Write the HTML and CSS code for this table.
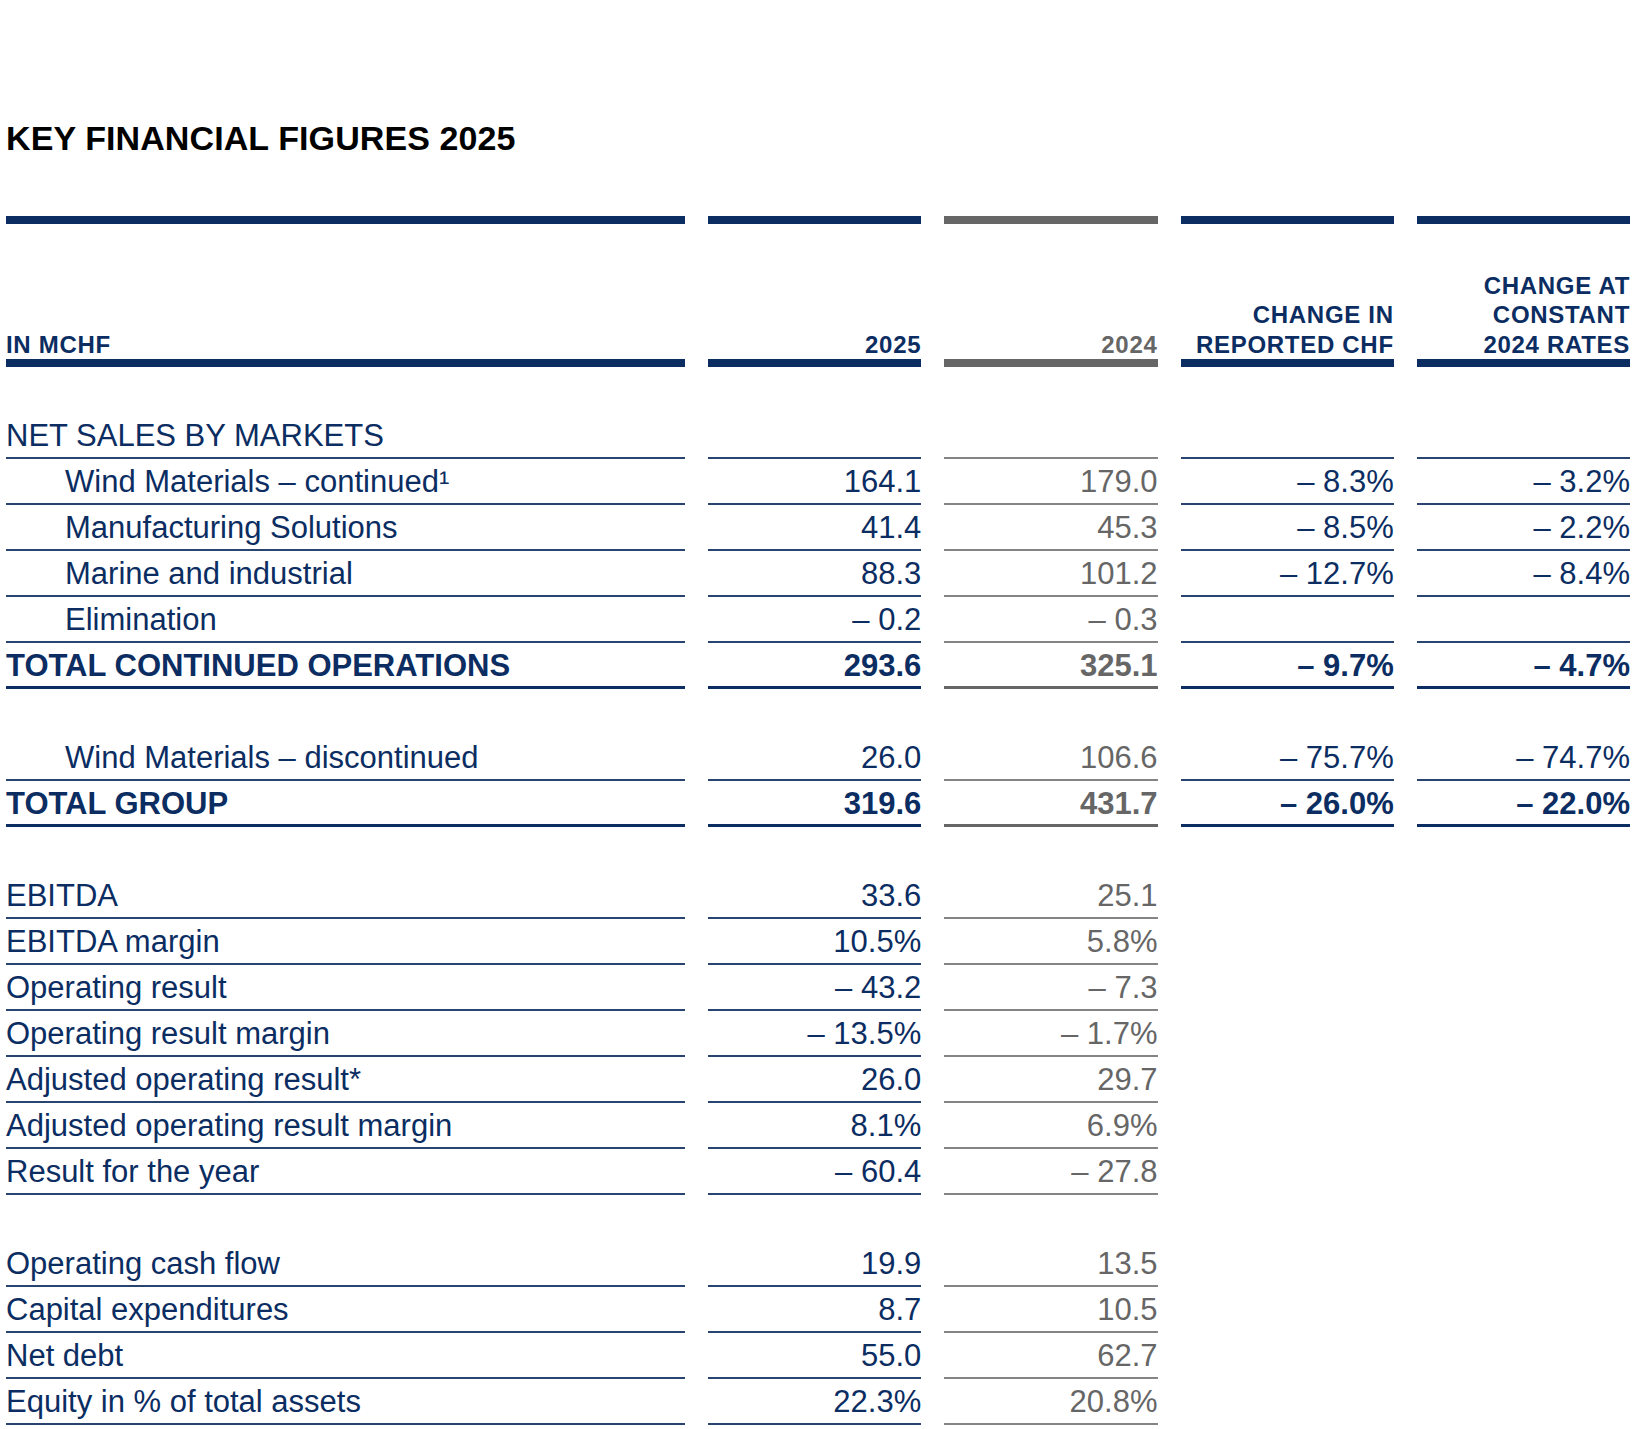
FILE: index.html
```html
<!DOCTYPE html>
<html lang="en">
<head>
<meta charset="utf-8">
<title>Key Financial Figures 2025</title>
<link rel="stylesheet" href="styles.css">
</head>
<body>
<main class="page">
  <h1 class="title">KEY FINANCIAL FIGURES 2025</h1>

  <div class="head">
    <div class="hcell left">IN MCHF</div>
    <div class="hcell">2025</div>
    <div class="hcell grey">2024</div>
    <div class="hcell">CHANGE IN<br>REPORTED CHF</div>
    <div class="hcell">CHANGE AT<br>CONSTANT<br>2024 RATES</div>
  </div>

  <div class="body">
    <div class="row">
      <div class="cell label">NET SALES BY MARKETS</div>
      <div class="cell num"></div><div class="cell num grey"></div><div class="cell num"></div><div class="cell num"></div>
    </div>
    <div class="row">
      <div class="cell label indent">Wind Materials – continued¹</div>
      <div class="cell num">164.1</div><div class="cell num grey">179.0</div><div class="cell num">– 8.3%</div><div class="cell num">– 3.2%</div>
    </div>
    <div class="row">
      <div class="cell label indent">Manufacturing Solutions</div>
      <div class="cell num">41.4</div><div class="cell num grey">45.3</div><div class="cell num">– 8.5%</div><div class="cell num">– 2.2%</div>
    </div>
    <div class="row">
      <div class="cell label indent">Marine and industrial</div>
      <div class="cell num">88.3</div><div class="cell num grey">101.2</div><div class="cell num">– 12.7%</div><div class="cell num">– 8.4%</div>
    </div>
    <div class="row">
      <div class="cell label indent">Elimination</div>
      <div class="cell num">– 0.2</div><div class="cell num grey">– 0.3</div><div class="cell num"></div><div class="cell num"></div>
    </div>
    <div class="row total">
      <div class="cell label">TOTAL CONTINUED OPERATIONS</div>
      <div class="cell num">293.6</div><div class="cell num grey">325.1</div><div class="cell num">– 9.7%</div><div class="cell num">– 4.7%</div>
    </div>

    <div class="row spacer"></div>

    <div class="row">
      <div class="cell label indent">Wind Materials – discontinued</div>
      <div class="cell num">26.0</div><div class="cell num grey">106.6</div><div class="cell num">– 75.7%</div><div class="cell num">– 74.7%</div>
    </div>
    <div class="row total">
      <div class="cell label">TOTAL GROUP</div>
      <div class="cell num">319.6</div><div class="cell num grey">431.7</div><div class="cell num">– 26.0%</div><div class="cell num">– 22.0%</div>
    </div>

    <div class="row spacer"></div>

    <div class="row">
      <div class="cell label">EBITDA</div>
      <div class="cell num">33.6</div><div class="cell num grey">25.1</div>
    </div>
    <div class="row">
      <div class="cell label">EBITDA margin</div>
      <div class="cell num">10.5%</div><div class="cell num grey">5.8%</div>
    </div>
    <div class="row">
      <div class="cell label">Operating result</div>
      <div class="cell num">– 43.2</div><div class="cell num grey">– 7.3</div>
    </div>
    <div class="row">
      <div class="cell label">Operating result margin</div>
      <div class="cell num">– 13.5%</div><div class="cell num grey">– 1.7%</div>
    </div>
    <div class="row">
      <div class="cell label">Adjusted operating result*</div>
      <div class="cell num">26.0</div><div class="cell num grey">29.7</div>
    </div>
    <div class="row">
      <div class="cell label">Adjusted operating result margin</div>
      <div class="cell num">8.1%</div><div class="cell num grey">6.9%</div>
    </div>
    <div class="row">
      <div class="cell label">Result for the year</div>
      <div class="cell num">– 60.4</div><div class="cell num grey">– 27.8</div>
    </div>

    <div class="row spacer"></div>

    <div class="row">
      <div class="cell label">Operating cash flow</div>
      <div class="cell num">19.9</div><div class="cell num grey">13.5</div>
    </div>
    <div class="row">
      <div class="cell label">Capital expenditures</div>
      <div class="cell num">8.7</div><div class="cell num grey">10.5</div>
    </div>
    <div class="row">
      <div class="cell label">Net debt</div>
      <div class="cell num">55.0</div><div class="cell num grey">62.7</div>
    </div>
    <div class="row">
      <div class="cell label">Equity in % of total assets</div>
      <div class="cell num">22.3%</div><div class="cell num grey">20.8%</div>
    </div>
  </div>
</main>
</body>
</html>
```

FILE: styles.css
```css
:root {
  --navy: #0b2d62;
  --navy-line: #28446f;
  --grey: #666666;
  --grey-line: #858585;
}

html, body {
  margin: 0;
  padding: 0;
  background: #ffffff;
}

body {
  font-family: "Liberation Sans", Arial, sans-serif;
  color: var(--navy);
}

.page {
  padding: 0 6px;
  width: 1624px;
}

.title {
  margin: 118px 0 0 0;
  font-size: 34px;
  line-height: 40px;
  font-weight: 700;
  color: #000000;
  letter-spacing: 0.1px;
}

.head,
.row {
  display: grid;
  grid-template-columns: 679px repeat(4, 1fr);
  column-gap: 23px;
}

.head {
  margin-top: 58px;
}

.hcell {
  box-sizing: border-box;
  height: 151px;
  border-top: 8px solid var(--navy);
  border-bottom: 8px solid var(--navy);
  display: flex;
  align-items: flex-end;
  justify-content: flex-end;
  text-align: right;
  font-size: 24px;
  line-height: 29.5px;
  font-weight: 700;
  letter-spacing: 0.7px;
  color: var(--navy);
}

.hcell.left {
  justify-content: flex-start;
  text-align: left;
}

.hcell.grey {
  border-color: var(--grey);
  color: var(--grey);
}

.body {
  margin-top: 46px;
}

.row {
  height: 46px;
}

.cell {
  box-sizing: border-box;
  border-bottom: 2px solid var(--navy-line);
  display: flex;
  align-items: flex-end;
  padding-bottom: 4px;
  font-size: 31px;
  line-height: 34px;
  white-space: nowrap;
  color: var(--navy);
}

.cell.num {
  justify-content: flex-end;
}

.cell.grey {
  color: var(--grey);
  border-bottom-color: var(--grey-line);
}

.cell.indent {
  padding-left: 59px;
}

.row.total .cell {
  font-weight: 700;
  border-bottom-width: 3px;
  border-bottom-color: var(--navy);
  padding-bottom: 3px;
}

.row.total .cell.grey {
  border-bottom-color: var(--grey);
}
```
